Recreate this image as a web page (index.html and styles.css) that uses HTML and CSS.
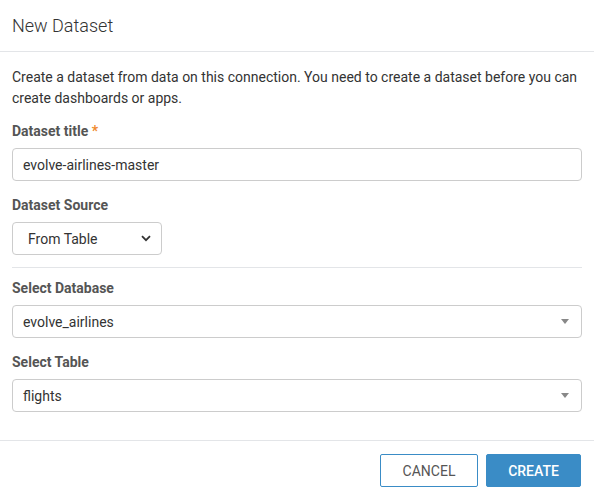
FILE: index.html
```html
<!DOCTYPE html>
<html>
<head>
<meta charset="utf-8">
<link rel="stylesheet" href="styles.css">
</head>
<body>
<div class="modal">
  <div class="modal-header"><h1 class="title">New Dataset</h1></div>
  <div class="modal-body">
    <p class="intro">Create a dataset from data on this connection. You need to create a dataset before you can create dashboards or apps.</p>
    <div class="field">
      <div class="label">Dataset title <span class="req">*</span></div>
      <div class="input">evolve-airlines-master</div>
    </div>
    <div class="field">
      <div class="label">Dataset Source</div>
      <div class="native-select">
        <span>From Table</span>
        <svg class="chev" width="10" height="7" viewBox="0 0 10 7"><path d="M1 1.2 L5 5.2 L9 1.2" fill="none" stroke="#333" stroke-width="1.8"/></svg>
      </div>
    </div>
    <hr class="divider">
    <div class="field">
      <div class="label">Select Database</div>
      <div class="select"><span>evolve_airlines</span><span class="caret"></span></div>
    </div>
    <div class="field">
      <div class="label">Select Table</div>
      <div class="select"><span>flights</span><span class="caret"></span></div>
    </div>
  </div>
  <div class="modal-footer">
    <button class="btn btn-cancel">CANCEL</button>
    <button class="btn btn-create">CREATE</button>
  </div>
</div>
</body>
</html>
```

FILE: styles.css
```css
html, body {
  margin: 0;
  padding: 0;
  background: #fff;
}
body {
  font-family: Roboto, "Liberation Sans", Arial, sans-serif;
  color: #333;
  font-size: 14px;
}
.modal {
  width: 594px;
}
.modal-header {
  height: 52px;
  border-bottom: 1px solid #e3e5e8;
  display: flex;
  align-items: center;
  padding: 0 12px;
  box-sizing: border-box;
}
.title {
  margin: 0;
  font-size: 18px;
  font-weight: 300;
  color: #333;
}
.modal-body {
  padding: 15px 12px 28px 12px;
}
.intro {
  margin: 0;
  line-height: 21px;
  font-size: 14px;
  color: #333;
}
.field {
  margin-top: 12px;
}
.field + .field {
  margin-top: 14px;
}
.label {
  font-weight: 700;
  color: #555;
  font-size: 14px;
  line-height: 20px;
  margin-bottom: 7px;
}
.req {
  color: #f0892c;
}
.input, .select, .native-select {
  height: 33px;
  box-sizing: border-box;
  border: 1px solid #ccc;
  border-radius: 4px;
  display: flex;
  align-items: center;
  padding: 0 10px;
  color: #333;
  font-size: 14px;
}
.native-select {
  width: 150px;
  padding: 0 10px 0 15px;
  justify-content: space-between;
}
.select {
  justify-content: space-between;
}
.caret {
  width: 0;
  height: 0;
  border-left: 4px solid transparent;
  border-right: 4px solid transparent;
  border-top: 5px solid #888;
  margin-right: 2px;
}
.divider {
  border: 0;
  border-top: 1px solid #e3e5e8;
  margin: 12px 0 0 0;
}
.divider + .field {
  margin-top: 10px;
}
.modal-footer {
  border-top: 1px solid #e3e5e8;
  padding: 13px 13px 14px 12px;
  display: flex;
  justify-content: flex-end;
  gap: 8px;
}
.btn {
  height: 33px;
  box-sizing: border-box;
  border-radius: 2px;
  font-family: Roboto, "Liberation Sans", Arial, sans-serif;
  font-size: 14px;
  padding: 0;
  cursor: pointer;
}
.btn-cancel {
  width: 98px;
  background: #fff;
  border: 1px solid #3a8cc6;
  color: #555;
}
.btn-create {
  width: 95px;
  background: #3a8cc6;
  border: 1px solid #3a8cc6;
  color: #fff;
  font-weight: 500;
}
```
